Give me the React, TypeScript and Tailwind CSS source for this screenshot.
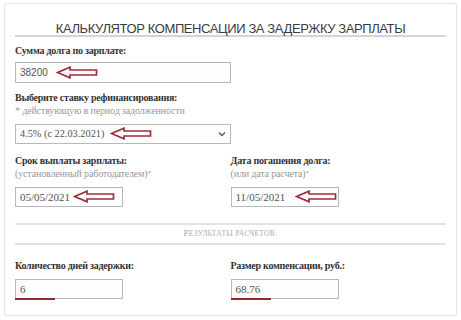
import React from 'react';

const serif = { fontFamily: '"Liberation Serif", "DejaVu Serif", serif' };
const sans = { fontFamily: '"Liberation Sans", Arial, sans-serif' };

function Arrow({ className }: { className?: string }) {
  return (
    <svg className={className} width="42" height="13" viewBox="0 0 42 13" fill="none">
      <path
        d="M1.5 6.5 L14 1.2 L14 4 L40.5 4 L40.5 9 L14 9 L14 11.8 Z"
        stroke="#a12d39"
        strokeWidth="1.7"
        strokeLinejoin="miter"
      />
    </svg>
  );
}

function Label({ children }: { children: React.ReactNode }) {
  return (
    <div className="text-[10px] leading-[13px] font-bold tracking-[-0.25px] text-[#333]" style={serif}>
      {children}
    </div>
  );
}

function Hint({ children, star }: { children: React.ReactNode; star?: boolean }) {
  return (
    <div className="text-[10px] leading-[13px] tracking-[-0.15px] text-[#999]" style={serif}>
      {children}
      {star && <span className="text-[#c08080] text-[7px] align-top">*</span>}
    </div>
  );
}

function Field({
  value,
  width,
  height,
  arrowLeft,
  arrowTop,
  font,
  underline,
}: {
  value: string;
  width: string;
  height: string;
  arrowLeft?: string;
  arrowTop?: string;
  font?: 'sans' | 'serif';
  underline?: boolean;
}) {
  return (
    <div className={`relative ${width}`}>
      <div
        className={`${height} border border-[#b8b8b8] bg-[#fdfdfd] flex items-center pl-[4px] text-[#555] ${
          font === 'sans' ? 'text-[10px]' : 'text-[11px]'
        }`}
        style={font === 'sans' ? sans : serif}
      >
        {value}
      </div>
      {arrowLeft && <Arrow className={`absolute ${arrowTop ?? 'top-[4px]'} ${arrowLeft}`} />}
      {underline && <div className="absolute left-0 -bottom-[1px] h-[2px] w-[40px] bg-[#8f2b2f]" />}
    </div>
  );
}

export default function App() {
  return (
    <div className="w-[461px] h-[320px] bg-white pt-[3px] px-[4px]">
      <div className="h-[313px] border border-[#e4e4e4] rounded-[2px] shadow-[0_0_2px_rgba(0,0,0,0.06)] px-[10px]">
        <div
          className="pt-[19px] text-center text-[13px] leading-[12px] tracking-[-0.4px] text-[#3c3c3c] border-b-2 border-[#d4d4d4]"
          style={sans}
        >
          КАЛЬКУЛЯТОР КОМПЕНСАЦИИ ЗА ЗАДЕРЖКУ ЗАРПЛАТЫ
        </div>

        <div className="mt-[7px]">
          <Label>Сумма долга по зарплате:</Label>
        </div>
        <div className="mt-[5px]">
          <Field value="38200" width="w-[216px]" height="h-[21px]" arrowLeft="left-[41px]" font="sans" />
        </div>

        <div className="mt-[8px]">
          <Label>Выберите ставку рефинансирования:</Label>
          <Hint>* действующую в период задолженности</Hint>
        </div>
        <div className="mt-[7px] relative w-[216px]">
          <div
            className="h-[20px] border border-[#b8b8b8] bg-[#fdfdfd] flex items-center justify-between pl-[4px] pr-[4px] text-[10.3px] text-[#555]"
            style={serif}
          >
            <span>4.5% (с 22.03.2021)</span>
            <svg width="8" height="6" viewBox="0 0 8 6" fill="none">
              <path d="M1 1.5 L4 4.5 L7 1.5" stroke="#555" strokeWidth="1.3" />
            </svg>
          </div>
          <Arrow className="absolute top-[3px] left-[95px]" />
        </div>

        <div className="mt-[10px] grid grid-cols-2">
          <div>
            <Label>Срок выплаты зарплаты:</Label>
            <Hint star>(установленный работодателем)</Hint>
            <div className="mt-[7px]">
              <Field value="05/05/2021" width="w-[108px]" height="h-[20px]" arrowLeft="left-[58px]" arrowTop="top-[3px]" />
            </div>
          </div>
          <div>
            <Label>Дата погашения долга:</Label>
            <Hint star>(или дата расчета)</Hint>
            <div className="mt-[7px]">
              <Field value="11/05/2021" width="w-[108px]" height="h-[20px]" arrowLeft="left-[64px]" arrowTop="top-[3px]" />
            </div>
          </div>
        </div>

        <div className="mt-[16px] border-t-2 border-b-2 border-[#e3e3e3] h-[22px] flex items-center justify-center">
          <span className="text-[7.5px] tracking-[0.3px] text-[#aaa] uppercase" style={serif}>
            <span className="text-[9px]">Р</span>езультаты расчетов:
          </span>
        </div>

        <div className="mt-[14px] grid grid-cols-2">
          <div>
            <Label>Количество дней задержки:</Label>
            <div className="mt-[7px]">
              <Field value="6" width="w-[108px]" height="h-[20px]" underline />
            </div>
          </div>
          <div>
            <Label>Размер компенсации, руб.:</Label>
            <div className="mt-[7px]">
              <Field value="68.76" width="w-[108px]" height="h-[20px]" underline />
            </div>
          </div>
        </div>
      </div>
    </div>
  );
}
